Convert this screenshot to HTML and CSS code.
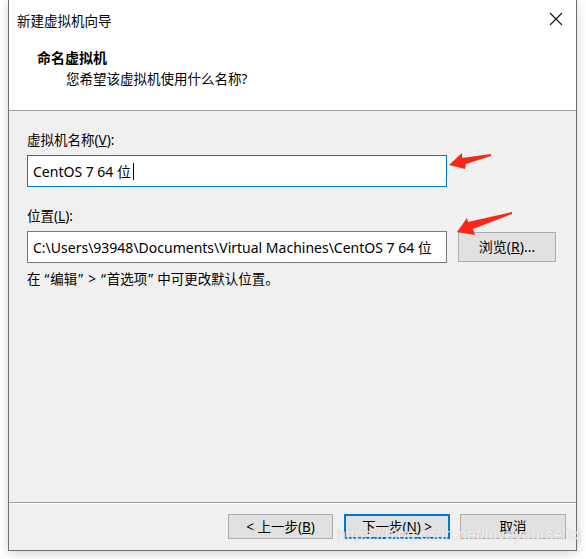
FILE: index.html
```html
<!DOCTYPE html>
<html lang="zh-CN">
<head>
<meta charset="utf-8">
<title>新建虚拟机向导</title>
<link rel="stylesheet" href="styles.css">
</head>
<body>
<div class="window">
  <div class="titlebar">
    <span class="title">新建虚拟机向导</span>
    <span class="close">
      <svg width="14" height="14" viewBox="0 0 14 14"><path d="M1 1 L13 13 M13 1 L1 13" stroke="#111" stroke-width="1.1" fill="none"/></svg>
    </span>
  </div>
  <div class="header">
    <div class="heading">命名虚拟机</div>
    <div class="subheading">您希望该虚拟机使用什么名称?</div>
  </div>
  <div class="content">
    <div class="label">虚拟机名称(<u>V</u>):</div>
    <div class="input focused">CentOS 7 64 位<span class="caret"></span></div>
    <div class="label second">位置(<u>L</u>):</div>
    <div class="row">
      <div class="input">C:\Users\93948\Documents\Virtual Machines\CentOS 7 64 位</div>
      <button class="btn browse">浏览(<u>R</u>)...</button>
    </div>
    <div class="hint">在<span class="qo">“</span>编辑<span class="qc">”</span><span class="gt">&gt;</span><span class="qo">“</span>首选项<span class="qc">”</span>中可更改默认位置。</div>
  </div>
  <div class="footer">
    <button class="btn">&lt; 上一步(<u>B</u>)</button>
    <button class="btn default">下一步(<u>N</u>) &gt;</button>
    <button class="btn">取消</button>
  </div>
</div>
<svg class="arrows" width="586" height="559" viewBox="0 0 586 559">
  <polygon fill="#f5281a" points="449,165 462,153 462,158 491,154 491,156 466,164 465,169"/>
  <polygon fill="#f5281a" points="457,232 467,218 468,222 512,212 512,214 473,229 475,235"/>
</svg>
<div class="watermark">https://blog.csdn.net/loveyourselfcj</div>
</body>
</html>
```

FILE: styles.css
```css
html, body {
  margin: 0;
  padding: 0;
  background: #ffffff;
  width: 586px;
  height: 559px;
  overflow: hidden;
  position: relative;
  font-family: "Noto Sans", "Noto Sans CJK SC", sans-serif;
  font-size: 13.5px;
  color: #000;
}

.window {
  margin-left: 8px;
  width: 567px;
  height: 550px;
  border: 1px solid #6f6f6f;
  border-top: none;
  background: #f0f0f0;
  box-shadow: 0 2px 10px rgba(0, 0, 0, 0.18);
  display: flex;
  flex-direction: column;
}

.titlebar {
  height: 42px;
  background: #fff;
  display: flex;
  align-items: center;
  justify-content: space-between;
  padding: 0 13px 0 8px;
  flex-shrink: 0;
}

.title {
  font-size: 13.5px;
  line-height: 20px;
}

.close {
  display: flex;
  width: 14px;
  height: 14px;
  margin-top: -4px;
}

.header {
  background: #fff;
  border-bottom: 1px solid #a0a0a0;
  padding: 6px 0 0 28px;
  box-sizing: border-box;
  flex-shrink: 0;
  height: 69px;
}

.heading {
  font-weight: bold;
  line-height: 20px;
  font-size: 14px;
}

.subheading {
  margin-top: 1px;
  margin-left: 29px;
  line-height: 20px;
}

.content {
  height: 391px;
  padding: 19px 0 0 18px;
  box-sizing: border-box;
  flex-shrink: 0;
}

.label {
  line-height: 20px;
}

.label.second {
  margin-top: 19px;
}

.input {
  margin-top: 5px;
  width: 420px;
  height: 32px;
  box-sizing: border-box;
  background: #fff;
  border: 1px solid #7a7a7a;
  padding: 0 5px;
  display: flex;
  align-items: center;
  white-space: nowrap;
  overflow: hidden;
  font-size: 14px;
}

.input.focused {
  border-color: #0078d7;
}

.caret {
  display: inline-block;
  width: 1px;
  height: 17px;
  background: #000;
  margin-left: 2px;
}

.row {
  display: flex;
  align-items: flex-end;
  gap: 11px;
}

.btn {
  font-family: "Noto Sans", "Noto Sans CJK SC", sans-serif;
  font-size: 13.5px;
  color: #000;
  background: #e1e1e1;
  border: 1px solid #adadad;
  padding: 0;
  margin: 0;
  width: 105px;
  height: 25px;
  line-height: 20px;
}

.btn.browse {
  width: 98px;
  height: 30px;
  margin-bottom: 1px;
  font-size: 14px;
}

.btn.default {
  border: 2px solid #0078d7;
  width: 106px;
}

.hint {
  margin-top: 6px;
  line-height: 20px;
}

.qo {
  padding: 0 1px 0 4px;
}

.qc {
  padding: 0 4px 0 1px;
}

.gt {
  padding: 0 1px;
}

.footer {
  border-top: 1px solid #a0a0a0;
  box-shadow: inset 0 1px 0 #ffffff;
  flex: 1;
  display: flex;
  justify-content: flex-end;
  align-items: flex-start;
  padding: 11px 10px 0 0;
  gap: 11px;
}

.footer .btn:last-child {
  width: 106px;
  margin-left: -1px;
}

.arrows {
  position: absolute;
  left: 0;
  top: 0;
  pointer-events: none;
}

.watermark {
  position: absolute;
  left: 337px;
  top: 526px;
  font-family: "Liberation Sans", sans-serif;
  font-size: 16px;
  color: rgba(255, 255, 255, 0.78);
  text-shadow: 0 0 1px rgba(150, 150, 150, 0.6);
  white-space: nowrap;
}
```
